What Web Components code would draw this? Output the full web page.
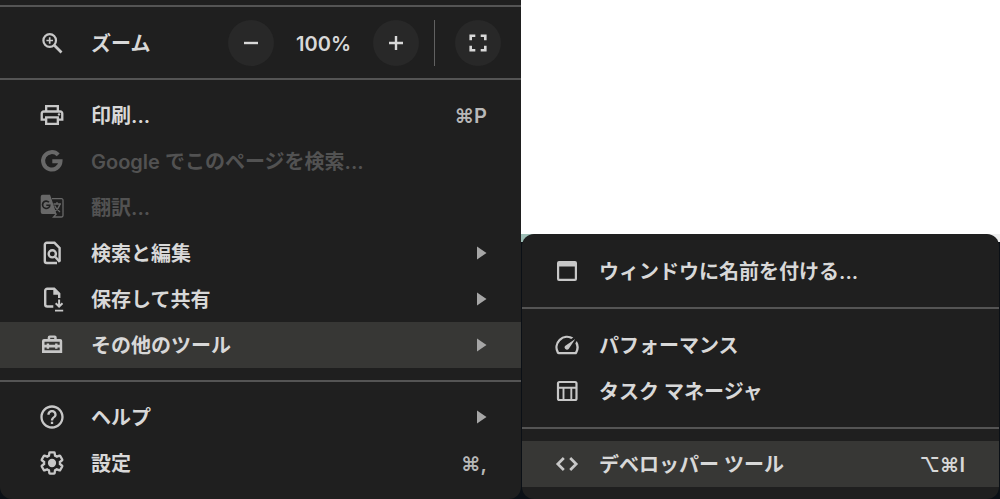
<!DOCTYPE html>
<html lang="ja">
<head>
<meta charset="utf-8">
<meta name="viewport" content="width=device-width, initial-scale=1">
<title>メニュー</title>
<style>
  body {
    margin: 0;
    background: #fff;
    font: 600 20px/28px Inter, "Noto Sans CJK JP", sans-serif;
    color: #d8d8d8;
    --surface: #1f1f1f;
    --hover: #373735;
    --rule: #545454;
    --icon: #c7c7c7;
  }
</style>
</head>
<body>
<menu-stage>
  <menu-panel slot="main" class="main" label="Chrome">
    <menu-rule></menu-rule>
    <menu-section><zoom-row value="100%">ズーム</zoom-row></menu-section>
    <menu-rule></menu-rule>
    <menu-section>
      <menu-row icon="print" keys="⌘P">印刷...</menu-row>
      <menu-row icon="google" disabled>Google でこのページを検索...</menu-row>
      <menu-row icon="translate" disabled>翻訳...</menu-row>
      <menu-row icon="find" submenu>検索と編集</menu-row>
      <menu-row icon="save" submenu>保存して共有</menu-row>
      <menu-row icon="toolbox" submenu active>その他のツール</menu-row>
    </menu-section>
    <menu-rule></menu-rule>
    <menu-section>
      <menu-row icon="help" submenu>ヘルプ</menu-row>
      <menu-row icon="settings" keys="⌘,">設定</menu-row>
    </menu-section>
  </menu-panel>
  <menu-panel slot="sub" class="sub" label="その他のツール">
    <menu-section><menu-row icon="window">ウィンドウに名前を付ける...</menu-row></menu-section>
    <menu-rule></menu-rule>
    <menu-section>
      <menu-row icon="speed">パフォーマンス</menu-row>
      <menu-row icon="tasks">タスク マネージャ</menu-row>
    </menu-section>
    <menu-rule></menu-rule>
    <menu-section tight><menu-row icon="code" keys="⌥⌘I" active>デベロッパー ツール</menu-row></menu-section>
  </menu-panel>
</menu-stage>

<script>
const ICONS = {
  zoom: '<g fill="none" stroke="currentColor"><circle cx="11.7" cy="11.5" r="6.3" stroke-width="2.2"/><path d="M16.3 16.2l7.2 7.3" stroke-width="2.7"/><path d="M8.4 11.5H15M11.7 8.2v6.6" stroke-width="1.7"/></g>',
  print: '<path transform="scale(1.1667)" d="M19 8h-1V3.400H6V8H5c-1.66 0-2.800 1.140-2.800 2.800V17H6v3.600h12V17h3.800v-6.200C21.800 9.140 20.660 8 19 8zM8 5.400h8V8H8zm8 13.200H8V15h8zm2-3.600v-2H6v2H4.200v-4c0-.55.35-1 .8-1h14c.45 0 .8.45.8 1v4z"/><circle cx="21" cy="13.400" r="1.200"/>',
  google: '<path fill="none" stroke="currentColor" stroke-width="4" d="M20.200 7.900A8.700 8.700 0 1 0 22.500 14.300H14.300"/>',
  translate: '<path fill-rule="evenodd" d="M4.700 1.700H12l1.200 3.300 5.300 16H4.700a2 2 0 0 1-2-2V3.700a2 2 0 0 1 2-2zM11.600 8.700A4.500 4.500 0 1 0 12.700 11.500H8.300V13H11A2.900 2.900 0 1 1 10.400 9.800z"/><path fill="none" stroke="currentColor" stroke-width="1.300" d="M14 5.700h9.500a1.500 1.500 0 0 1 1.500 1.500v15.300a1.500 1.500 0 0 1-1.500 1.500h-8l3-3.300M15.500 11h7.500M19 9v2M22 11c-.8 3-2.800 5.500-5.200 7.200M16.600 12.500c1 2.600 3 4.700 5.400 6.500"/>',
  find: '<g fill="none" stroke="currentColor" stroke-width="2.400"><path d="M19 24H8.800a2 2 0 0 1-2-2V5.800a2 2 0 0 1 2-2h7.700l5.100 5.100V22.500"/><circle cx="14.300" cy="14.800" r="3.600"/><path d="M16.700 17.300l5.100 5.600"/></g>',
  save: '<path fill="none" stroke="currentColor" stroke-width="2.400" d="M15.300 21.500H9.200a2 2 0 0 1-2-2V5.800a2 2 0 0 1 2-2h7l5 5V13"/><path d="M15.300 3v6.700h7zM20.100 14.500h2v4.700l1.700-1.700 1.400 1.400-4.100 4.100-4.100-4.100 1.400-1.400 1.700 1.700zM17 24.700h8.200v1.800H17z"/>',
  toolbox: '<path fill-rule="evenodd" d="M9.700 8V6.500a2 2 0 0 1 2-2h5a2 2 0 0 1 2 2V8h3.500a2 2 0 0 1 2 2v12H4V10a2 2 0 0 1 2-2zm2.500 0h4V6.800h-4zM6.500 10.800v3h2.200v-1.300h2.400v1.300h6v-1.300h2.400v1.300h2.200v-3zM6.500 16.500v2.700h15.200v-2.700h-2.200v1.300h-2.400v-1.300h-6v1.300H8.700v-1.300z"/>',
  help: '<path transform="scale(1.1667)" d="M11 18h2v-2h-2v2zm1-16C6.480 2 2 6.480 2 12s4.480 10 10 10 10-4.480 10-10S17.520 2 12 2zm0 18c-4.410 0-8-3.590-8-8s3.590-8 8-8 8 3.590 8 8-3.590 8-8 8zm0-14c-2.210 0-4 1.790-4 4h2c0-1.100.9-2 2-2s2 .9 2 2c0 2-3 1.750-3 5h2c0-2.250 3-2.500 3-5 0-2.210-1.790-4-4-4z"/>',
  settings: '<g transform="translate(14 14) scale(1.060) translate(-12 -12)"><path fill="none" stroke="currentColor" stroke-width="2.200" d="M19.430 12.980c.04-.32.07-.64.07-.98 0-.34-.03-.66-.07-.98l2.110-1.650c.19-.15.24-.42.12-.64l-2-3.460c-.09-.16-.26-.25-.44-.25-.06 0-.12.01-.17.03l-2.490 1c-.52-.4-1.080-.73-1.690-.98l-.38-2.650C14.460 2.180 14.250 2 14 2h-4c-.25 0-.46.18-.49.42l-.38 2.650c-.61.25-1.170.59-1.690.98l-2.490-1c-.06-.02-.12-.03-.18-.03-.17 0-.34.09-.43.25l-2 3.460c-.13.22-.07.49.12.64l2.110 1.650c-.04.32-.07.65-.07.98 0 .33.03.66.07.98l-2.110 1.650c-.19.15-.24.42-.12.64l2 3.460c.09.16.26.25.44.25.06 0 .12-.01.17-.03l2.490-1c.52.4 1.080.73 1.690.98l.38 2.650c.03.24.24.42.49.42h4c.25 0 .46-.18.49-.42l.38-2.650c.61-.25 1.170-.59 1.690-.98l2.490 1c.06.02.12.03.18.03.17 0 .34-.09.43-.25l2-3.460c.12-.22.07-.49-.12-.64z"/><circle cx="12" cy="12" r="3.900"/></g>',
  window: '<path fill-rule="evenodd" d="M6 4h16a2 2 0 0 1 2 2v16a2 2 0 0 1-2 2H6a2 2 0 0 1-2-2V6a2 2 0 0 1 2-2zm.2 5.500V21.800h15.600V9.500z"/>',
  speed: '<path transform="scale(1.1667)" d="M20.380 8.570l-1.230 1.850a8 8 0 0 1-.22 7.580H5.070A8 8 0 0 1 15.580 6.850l1.850-1.230A10 10 0 0 0 3.350 19a2 2 0 0 0 1.720 1h13.850a2 2 0 0 0 1.740-1 10 10 0 0 0-.27-10.440zm-9.790 6.840a2 2 0 0 0 2.830 0l5.660-8.490-8.490 5.660a2 2 0 0 0 0 2.830z"/>',
  tasks: '<g fill="none" stroke="currentColor"><rect x="5" y="5" width="18.500" height="18" rx="1.500" stroke-width="2.200"/><path d="M5 10.700h18.500M10.500 10.700V23M18.300 10.700V23" stroke-width="1.900"/></g>',
  code: '<path fill="none" stroke="currentColor" stroke-width="2.700" d="M10.800 8l-6 6 6 6M17.200 8l6 6-6 6"/>',
  minus: '<path d="M7 12.800h14v2.400H7z"/>',
  plus: '<path d="M7 12.800h5.800V7h2.400v5.800H21v2.400h-5.800V21h-2.400v-5.800H7z"/>',
  full: '<path fill="none" stroke="currentColor" stroke-width="2.600" d="M11.300 6.700H6.700v4.600M16.700 6.700h4.600v4.600M21.300 16.700v4.600h-4.600M11.300 21.300H6.700v-4.600"/>',
  arrow: '<path d="M9 7.500L18.500 14 9 20.500z"/>'
};

const define = (name, render) => customElements.define(name, class extends HTMLElement {
  constructor() { super(); this.attachShadow({ mode: 'open' }); }
  connectedCallback() { this.shadowRoot.innerHTML = render(this); }
});

define('menu-icon', el => `<style>
  :host { display: block; flex: none; width: 28px; height: 28px; }
  svg { display: block; }
</style><svg width="28" height="28" viewBox="0 0 28 28" fill="currentColor" aria-hidden="true">${ICONS[el.getAttribute('name')]}</svg>`);

define('menu-rule', () => `<style>
  :host { display: block; height: 2px; background: var(--rule); }
</style>`);

define('menu-section', () => `<style>
  :host { display: block; padding: var(--section-pad) 0; }
  :host([tight]) { padding: 12px 0; }
</style><slot></slot>`);

define('menu-row', el => {
  const keys = el.getAttribute('keys');
  const tail = keys ? `<kbd>${keys}</kbd>`
    : el.hasAttribute('submenu') ? '<menu-icon class="arrow" name="arrow"></menu-icon>' : '';
  return `<style>
    :host { display: block; }
    button {
      display: flex; align-items: center; width: 100%; height: 46px; box-sizing: border-box;
      margin: 0; padding: 0 34px 0 var(--lead); border: 0; background: none;
      color: inherit; font: inherit; text-align: left;
    }
    button:hover:enabled, :host([active]) button { background: var(--hover); }
    .icon { color: var(--icon); margin-right: var(--icon-gap); }
    .label { flex: 1; white-space: nowrap; padding-top: 2px; }
    kbd { font: inherit; color: var(--keys); padding-top: 2px; }
    .arrow { color: #a6a6a6; margin-right: -9px; }
    button:disabled { color: #525252; }
    button:disabled .icon { color: #686868; }
  </style>
  <button type="button" role="menuitem" ${el.hasAttribute('disabled') ? 'disabled' : ''} ${el.hasAttribute('submenu') ? 'aria-haspopup="menu"' : ''}>
    <menu-icon class="icon" name="${el.getAttribute('icon')}"></menu-icon>
    <span class="label"><slot></slot></span>${tail}
  </button>`;
});

define('zoom-row', el => `<style>
  :host { display: flex; align-items: center; height: 47px; padding: 0 20px 0 var(--lead); }
  .icon { color: var(--icon); margin-right: var(--icon-gap); }
  .label { flex: 1; padding-top: 2px; }
  button {
    display: grid; place-items: center; width: 46px; height: 46px; padding: 0;
    border: 0; border-radius: 50%; background: #282828; color: inherit;
  }
  output { width: 99px; padding-top: 2px; text-align: center; }
  .bar { width: 1px; height: 46px; margin: 0 20px 0 15px; background: #616161; }
</style>
<menu-icon class="icon" name="zoom"></menu-icon>
<span class="label"><slot></slot></span>
<button type="button" aria-label="縮小"><menu-icon name="minus"></menu-icon></button>
<output>${el.getAttribute('value')}</output>
<button type="button" aria-label="拡大"><menu-icon name="plus"></menu-icon></button>
<span class="bar"></span>
<button type="button" aria-label="全画面表示"><menu-icon name="full"></menu-icon></button>`);

define('menu-panel', el => `<style>
  :host { display: block; background: var(--surface); overflow: hidden; }
  :host(.main) {
    --lead: 38px; --icon-gap: 25px; --section-pad: 12px; --keys: #b8b8b8;
    padding-top: 5px; border-radius: 0 0 12px 12px;
  }
  :host(.sub) {
    --lead: 31px; --icon-gap: 18px; --section-pad: 13px; --keys: #d8d8d8;
    padding-top: 1px; border-radius: 12px;
  }
</style><nav role="menu" aria-label="${el.getAttribute('label')}"><slot></slot></nav>`);

define('menu-stage', () => `<style>
  :host {
    display: grid; grid-template-columns: 521fr 479fr; min-height: 100vh;
    background: #0b1016;
  }
  .side { display: flex; flex-direction: column; }
  .page { flex: 1; background: #fff; }
  .under {
    padding: 0 1px;
    background: linear-gradient(90deg, #9dbdb5 20px, #eee 40px) top / 100% 8px no-repeat, #0b1016;
  }
</style>
<slot name="main"></slot>
<div class="side"><div class="page"></div><div class="under"><slot name="sub"></slot></div></div>`);
</script>
</body>
</html>
